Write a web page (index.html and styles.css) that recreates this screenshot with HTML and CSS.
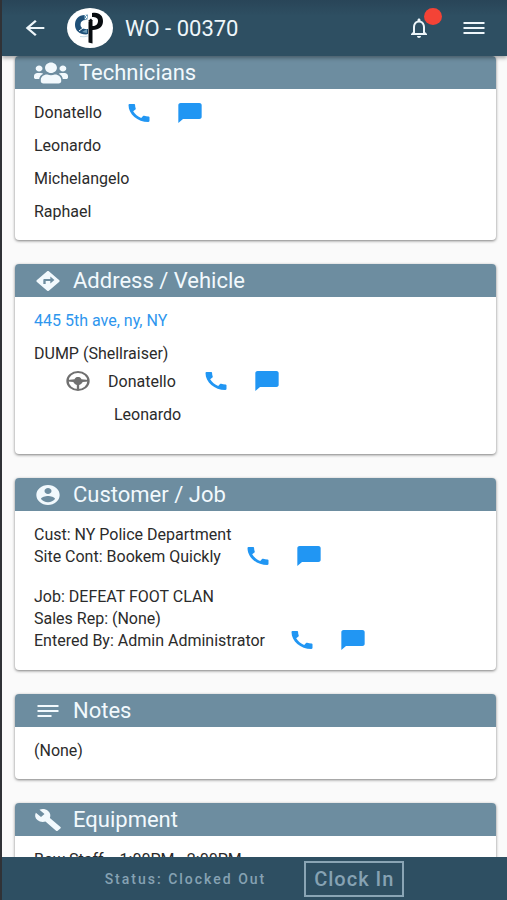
FILE: index.html
```html
<!DOCTYPE html>
<html lang="en">
<head>
<meta charset="utf-8">
<meta name="viewport" content="width=device-width, initial-scale=1">
<title>WO - 00370</title>
<link rel="stylesheet" href="styles.css">
</head>
<body>
<svg class="sprite" aria-hidden="true">
  <symbol id="phone" viewBox="0 0 24 24" preserveAspectRatio="none"><path d="M20.01 15.38c-1.23 0-2.42-.2-3.53-.56-.35-.12-.74-.03-1.01.24l-1.57 1.97c-2.83-1.35-5.48-3.9-6.89-6.83l1.95-1.66c.27-.28.35-.67.24-1.02-.37-1.11-.56-2.3-.56-3.53 0-.54-.45-.99-.99-.99H4.19C3.65 3 3 3.24 3 3.99 3 13.28 10.73 21 20.01 21c.71 0 .99-.63.99-1.18v-3.45c0-.54-.45-.99-.99-.99z"/></symbol>
  <symbol id="chat" viewBox="0 0 24 24" preserveAspectRatio="none"><path d="M20 2H4c-1.100 0-2 .9-2 2v18l4-4h14c1.100 0 2-.9 2-2V4c0-1.100-.9-2-2-2z"/></symbol>
</svg>

<header class="topbar">
  <button class="icon-button" type="button" aria-label="Back">
    <svg class="icon" viewBox="0 0 24 24" preserveAspectRatio="none"><path d="M20 11H7.830l5.590-5.590L12 4l-8 8 8 8 1.410-1.410L7.830 13H20v-2z"/></svg>
  </button>
  <svg class="logo" viewBox="0 0 46 40" role="img" aria-label="Company logo">
    <ellipse cx="23" cy="20" rx="23" ry="20" fill="#fff"/>
    <path d="M18 7C11 7 8 11.500 8 17s4.500 9.500 11 9.500l2-.5v-5c-4.500.5-7.500-1-7.500-4.500 0-3 2-4.500 5-4.500z" fill="#1f5078"/>
    <path d="M17 7l4-.5-.5 5-3 .5zM15 24l5-3v4z" fill="#6b9bb8"/>
    <path d="M17 6l3 3-2 2M12 23l4-3" fill="none" stroke="#fff"/>
    <path d="M25 5c7-1.500 11 2.500 11 8 0 5.500-3.500 9-10.500 9v13.500l-4-1V14h4v4c3.500 0 5.500-2 5.500-5S29 9 25 9z" fill="#080c10"/>
    <path d="M21 13l3-2.500 2 2.500-2 2z" fill="#080c10"/>
    <path d="M13 28.500q4 .8 8-.5" fill="none" stroke="#c5dbe7"/>
  </svg>
  <h1 class="topbar-title">WO - 00370</h1>
  <button class="icon-button bell" type="button" aria-label="Notifications">
    <svg class="icon" viewBox="0 0 24 24"><path d="M12 22c1.100 0 2-.9 2-2h-4c0 1.100.9 2 2 2zm6-6v-5c0-3.070-1.630-5.640-4.500-6.320V4c0-.83-.67-1.500-1.500-1.500s-1.500.67-1.500 1.500v.68C7.640 5.360 6 7.920 6 11v5l-2 2v1h16v-1l-2-2zm-2 1H8v-6c0-2.480 1.510-4.500 4-4.500s4 2.020 4 4.500v6z"/></svg>
    <span class="badge"></span>
  </button>
  <button class="icon-button" type="button" aria-label="Menu">
    <svg class="icon" viewBox="0 0 24 24" preserveAspectRatio="none"><path d="M3 18h18v-2H3v2zm0-5h18v-2H3v2zm0-7v2h18V6H3z"/></svg>
  </button>
</header>

<main class="content">
  <section class="card">
    <h2 class="card-head">
      <svg class="icon-wide" viewBox="0 0 640 512" preserveAspectRatio="none"><path d="M96 224c35.300 0 64-28.700 64-64s-28.700-64-64-64-64 28.700-64 64 28.700 64 64 64zm448 0c35.300 0 64-28.700 64-64s-28.700-64-64-64-64 28.700-64 64 28.700 64 64 64zm32 32h-64c-17.600 0-33.500 7.100-45.100 18.600 40.300 22.100 68.900 62 75.100 109.400h66c17.700 0 32-14.300 32-32v-32c0-35.300-28.700-64-64-64zm-256 0c61.900 0 112-50.100 112-112S381.900 32 320 32 208 82.100 208 144s50.100 112 112 112zm76.800 32h-8.300c-20.800 10-43.900 16-68.500 16s-47.600-6-68.500-16h-8.300C179.600 288 128 339.600 128 403.200V432c0 26.500 21.500 48 48 48h288c26.500 0 48-21.500 48-48v-28.800c0-63.600-51.600-115.200-115.200-115.200zm-223.700-13.400C161.500 263.100 145.600 256 128 256H64c-35.300 0-64 28.700-64 64v32c0 17.700 14.300 32 32 32h65.900c6.300-47.400 34.900-87.300 75.200-109.400z"/></svg>
      Technicians
    </h2>
    <div class="card-body">
      <div class="row">Donatello
        <button class="contact" type="button" aria-label="Call Donatello"><svg class="icon"><use href="#phone"/></svg></button>
        <button class="contact" type="button" aria-label="Message Donatello"><svg class="icon"><use href="#chat"/></svg></button>
      </div>
      <div class="row">Leonardo</div>
      <div class="row">Michelangelo</div>
      <div class="row">Raphael</div>
    </div>
  </section>

  <section class="card">
    <h2 class="card-head">
      <svg class="icon" viewBox="0 0 24 24" preserveAspectRatio="none"><path d="M21.710 11.290l-9-9c-.39-.39-1.020-.39-1.410 0l-9 9c-.39.39-.39 1.020 0 1.410l9 9c.39.39 1.020.39 1.410 0l9-9c.39-.38.39-1.010 0-1.410zM14 14.500V12h-4v3H8v-4c0-.55.45-1 1-1h5V7.500l3.500 3.500-3.500 3.500z"/></svg>
      Address / Vehicle
    </h2>
    <div class="card-body vehicle">
      <div class="row"><a class="address" href="#map">445 5th ave, ny, NY</a></div>
      <div class="row">DUMP (Shellraiser)</div>
      <div class="row row-tight driver">
        <svg class="icon wheel" viewBox="0 0 24 24" preserveAspectRatio="none" role="img" aria-label="Driver"><circle cx="12" cy="12" r="9" fill="none" stroke="currentColor" stroke-width="2"/><path d="M3 11l6-.7c.6-1.700 1.600-2.300 3-2.300s2.400.6 3 2.300l6 .7v1.500l-5 .5c-.6 1.500-1.500 2.400-3 3v5h-2v-5c-1.500-.6-2.400-1.500-3-3l-5-.5z"/></svg>
        Donatello
        <button class="contact" type="button" aria-label="Call driver"><svg class="icon"><use href="#phone"/></svg></button>
        <button class="contact" type="button" aria-label="Message driver"><svg class="icon"><use href="#chat"/></svg></button>
      </div>
      <div class="row passenger">Leonardo</div>
    </div>
  </section>

  <section class="card">
    <h2 class="card-head">
      <svg class="icon" viewBox="0 0 24 24" preserveAspectRatio="none"><path d="M12 2C6.480 2 2 6.480 2 12s4.480 10 10 10 10-4.480 10-10S17.520 2 12 2zm0 3c1.660 0 3 1.340 3 3s-1.340 3-3 3-3-1.340-3-3 1.340-3 3-3zm0 14.200c-2.500 0-4.710-1.280-6-3.220.03-1.990 4-3.080 6-3.080 1.990 0 5.970 1.090 6 3.080-1.290 1.940-3.500 3.220-6 3.220z"/></svg>
      Customer / Job
    </h2>
    <div class="card-body customer">
      <div>
        <div class="row row-tight">Cust: NY Police Department</div>
        <div class="row row-tight">Site Cont: Bookem Quickly
          <button class="contact" type="button" aria-label="Call site contact"><svg class="icon"><use href="#phone"/></svg></button>
          <button class="contact" type="button" aria-label="Message site contact"><svg class="icon"><use href="#chat"/></svg></button>
        </div>
      </div>
      <div>
        <div class="row row-tight">Job: DEFEAT FOOT CLAN</div>
        <div class="row row-tight">Sales Rep: (None)</div>
        <div class="row row-tight">Entered By: Admin Administrator
          <button class="contact" type="button" aria-label="Call administrator"><svg class="icon"><use href="#phone"/></svg></button>
          <button class="contact" type="button" aria-label="Message administrator"><svg class="icon"><use href="#chat"/></svg></button>
        </div>
      </div>
    </div>
  </section>

  <section class="card">
    <h2 class="card-head">
      <svg class="icon" viewBox="0 0 24 24" preserveAspectRatio="none"><path d="M3 18h12v-2H3v2zM3 6v2h18V6H3zm0 7h18v-2H3v2z"/></svg>
      Notes
    </h2>
    <div class="card-body"><div class="row">(None)</div></div>
  </section>

  <section class="card">
    <h2 class="card-head">
      <svg class="icon" viewBox="0 0 24 24" preserveAspectRatio="none"><path d="M22.700 19l-9.100-9.100c.9-2.300.4-5-1.500-6.900-2-2-5-2.400-7.400-1.300L9 6 6 9 1.600 4.700C.4 7.100.9 10.100 2.900 12.100c1.900 1.900 4.600 2.400 6.900 1.500l9.100 9.100c.4.400 1 .4 1.400 0l2.300-2.300c.5-.4.5-1.100.1-1.400z"/></svg>
      Equipment
    </h2>
    <div class="card-body"><div class="row">Bow Staff &nbsp;&nbsp; 1:00PM - 2:00PM</div></div>
  </section>
</main>

<footer class="clockbar">
  <span class="status">Status: Clocked Out</span>
  <button class="clock-in" type="button">Clock In</button>
</footer>
</body>
</html>
```
FILE: styles.css
```css
* {
  box-sizing: border-box;
}

body {
  display: flex;
  flex-direction: column;
  height: 100vh;
  margin: 0;
  border-left: 2px solid #303236;
  background: #fafafa;
  color: #2b2b2b;
  font-family: Roboto, "Liberation Sans", sans-serif;
  font-size: 16px;
}

button {
  padding: 0;
  border: 0;
  background: none;
  color: inherit;
  font: inherit;
}

.sprite {
  position: absolute;
  width: 0;
  height: 0;
}

.icon {
  display: block;
  flex: none;
  width: 28px;
  height: 24px;
  fill: currentColor;
}

.icon-wide {
  width: 34px;
  height: 24px;
  fill: currentColor;
}

.topbar {
  display: flex;
  flex: none;
  align-items: center;
  height: 56px;
  padding: 0 19px;
  background: linear-gradient(#294558, #2e4f62 16px);
  color: #eef6fa;
  box-shadow: 0 2px 4px rgba(0, 0, 0, 0.35);
  z-index: 1;
}

.logo {
  width: 46px;
  height: 40px;
  margin: 0 12px 0 18px;
}

.topbar-title {
  flex: 1;
  margin: 0;
  font-size: 22px;
  font-weight: 400;
}

.bell {
  position: relative;
  margin-right: 27px;
}

.badge {
  position: absolute;
  top: -8px;
  right: -9px;
  width: 18px;
  height: 17px;
  border-radius: 50%;
  background: #f44336;
}

.content {
  display: flex;
  flex: 1;
  flex-direction: column;
  gap: 24px;
  min-height: 0;
  padding: 0 11px 0 13px;
  overflow: hidden;
}

.card {
  flex: none;
  border-radius: 4px;
  background: #fff;
  box-shadow: 0 1px 3px rgba(0, 0, 0, 0.5);
}

.card-head {
  display: flex;
  align-items: center;
  gap: 11px;
  height: 33px;
  margin: 0;
  padding: 0 19px;
  border-radius: 4px 4px 0 0;
  background: #6d8da0;
  color: #f2f9fd;
  font-size: 22px;
  font-weight: 400;
}

.card-body {
  padding: 7px 19px 12px;
}

.vehicle {
  padding-bottom: 23px;
}

.customer {
  display: grid;
  gap: 18px;
  padding-top: 12px;
  padding-bottom: 19px;
}

.row {
  display: flex;
  align-items: center;
  height: 33px;
}

.row-tight {
  height: 22px;
}

.contact {
  margin-left: 23px;
  color: #2196f3;
}

.address {
  color: #2e96ee;
  text-decoration: none;
}

.driver {
  margin-bottom: 6px;
  padding-left: 30px;
}

.wheel {
  margin-right: 16px;
  color: #707070;
}

.wheel + .contact {
  margin-left: 26px;
}

.passenger {
  padding-left: 80px;
}

.clockbar {
  display: flex;
  flex: none;
  align-items: center;
  justify-content: center;
  gap: 38px;
  height: 43px;
  background: #2e4f62;
  color: #86a2b3;
  font-weight: 500;
  z-index: 1;
}

.status {
  font-size: 14px;
  letter-spacing: 2px;
}

.clock-in {
  padding: 4px 8px;
  border: 2px solid #8aa5b5;
  font-size: 20px;
  letter-spacing: 1px;
}
```
